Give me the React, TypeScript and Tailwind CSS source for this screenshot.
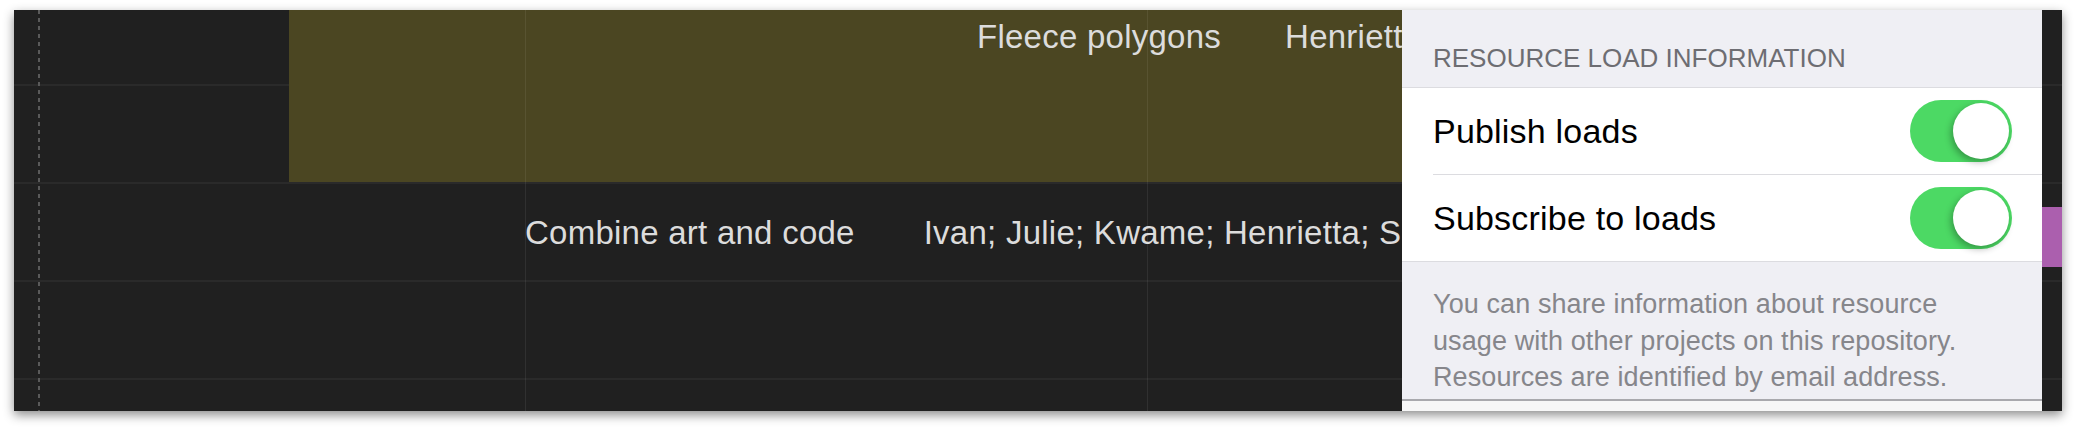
import React from 'react';

const font = { fontFamily: '"Liberation Sans", Arial, sans-serif' };

function Toggle() {
  return (
    <div className="relative h-[62px] w-[102px] rounded-full bg-[#4cd964]">
      <div className="absolute right-[3px] top-[3px] h-[56px] w-[56px] rounded-full bg-white shadow-[-2px_3px_7px_rgba(0,0,0,0.3)]" />
    </div>
  );
}

function SettingRow({ label, divider }: { label: string; divider?: boolean }) {
  return (
    <div className="flex flex-col">
      <div className="flex h-[86px] items-center justify-between pl-[31px] pr-[30px]">
        <span className="text-[34px] leading-none tracking-[0.2px] text-black">{label}</span>
        <Toggle />
      </div>
      {divider && <div className="ml-[31px] h-px bg-[#dcdce0]" />}
    </div>
  );
}

function LoadPanel() {
  return (
    <div className="absolute bottom-0 left-[1388px] top-0 z-10 flex w-[640px] flex-col bg-[#efeff4]">
      <div className="h-[77px] pl-[31px] pt-[35px] text-[26px] leading-none text-[#6d6d72]">
        RESOURCE LOAD INFORMATION
      </div>
      <div className="flex flex-col border-y border-[#dcdce0] bg-white">
        <SettingRow label="Publish loads" divider />
        <SettingRow label="Subscribe to loads" />
      </div>
      <div className="h-[137px] pl-[31px] pt-[24px] text-[27px] leading-[36.5px] tracking-[0.1px] text-[#86868b]">
        You can share information about resource
        <br />
        usage with other projects on this repository.
        <br />
        Resources are identified by email address.
      </div>
      <div className="h-[2px] bg-[#a9a9ad]" />
      <div className="flex-1 bg-[#f7f7f7]" />
    </div>
  );
}

export default function App() {
  return (
    <div className="h-[427px] w-[2076px] bg-white pl-[14px] pt-[10px]" style={font}>
      <div className="relative h-[401px] w-[2048px] overflow-hidden bg-[#202020] shadow-[0_4px_10px_rgba(0,0,0,0.45)]">
        {/* bars on the timeline canvas */}
        <div className="absolute left-[275px] top-0 z-[1] h-[172px] w-[1300px] bg-[#4b4622]" />
        <div className="absolute left-[2000px] top-[197px] z-[1] h-[60px] w-[100px] bg-[#ab5fae]" />

        {/* scrolled timeline rows */}
        <div className="mt-[-22px] flex flex-col text-[33px] leading-none tracking-[0.25px] text-[#dcdcdc]">
          <div className="flex h-[98px] items-center gap-[64px] border-b-2 border-[#2a2a2a] pl-[963px]">
            <span className="relative z-[2]">Fleece polygons</span>
            <span className="relative z-[2]">Henrietta</span>
          </div>
          <div className="h-[98px] border-b-2 border-[#2a2a2a]" />
          <div className="flex h-[98px] items-center gap-[69px] border-b-2 border-[#2a2a2a] pl-[511px]">
            <span className="relative z-[2]">Combine art and code</span>
            <span className="relative z-[2] whitespace-nowrap">Ivan; Julie; Kwame; Henrietta; Sam</span>
          </div>
          <div className="h-[98px] border-b-2 border-[#2a2a2a]" />
          <div className="h-[98px]" />
        </div>

        {/* grid overlays */}
        <div className="absolute bottom-0 left-[24px] top-0 z-[3] w-[2px] bg-[repeating-linear-gradient(to_bottom,#5a5a5a_0px,#5a5a5a_4px,transparent_4px,transparent_8px)]" />
        <div className="absolute bottom-0 left-[511px] top-0 z-[3] w-px bg-white/[0.07]" />
        <div className="absolute bottom-0 left-[1133px] top-0 z-[3] w-px bg-white/[0.07]" />

        <LoadPanel />
      </div>
    </div>
  );
}
